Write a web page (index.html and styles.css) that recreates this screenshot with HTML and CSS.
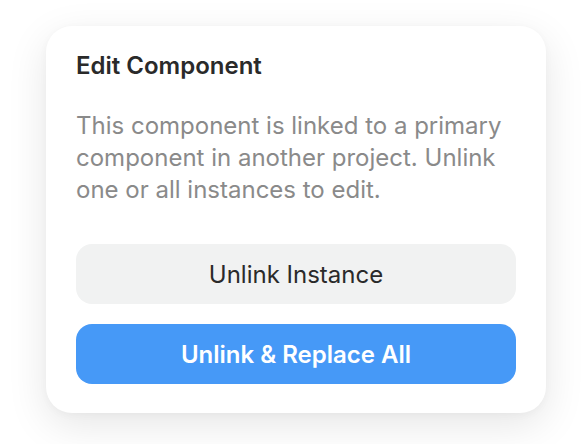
FILE: index.html
```html
<!DOCTYPE html>
<html>
<head>
<meta charset="utf-8">
<link rel="stylesheet" href="styles.css">
</head>
<body>
<div class="stage">
  <div class="card">
    <h1 class="title">Edit Component</h1>
    <p class="desc">This component is linked to a primary component in another project. Unlink one or all instances to edit.</p>
    <div class="actions">
      <button class="btn btn-secondary">Unlink Instance</button>
      <button class="btn btn-primary">Unlink &amp; Replace All</button>
    </div>
  </div>
</div>
</body>
</html>
```
FILE: styles.css
```css
html, body {
  margin: 0;
  padding: 0;
  background: #ffffff;
}
body {
  font-family: Inter, "Noto Sans", sans-serif;
  width: 588px;
  height: 444px;
  overflow: hidden;
}
.stage {
  padding: 26px 0 0 46px;
}
.card {
  width: 500px;
  box-sizing: border-box;
  padding: 24px 30px 29px 30px;
  background: #ffffff;
  border-radius: 26px;
  box-shadow: 0 12px 40px rgba(0, 0, 0, 0.10), 0 2px 8px rgba(0, 0, 0, 0.03);
}
.title {
  margin: 0;
  font-size: 24px;
  line-height: 32px;
  font-weight: 600;
  color: #2a2a2a;
}
.desc {
  margin: 28px 0 0 0;
  font-size: 24px;
  line-height: 32px;
  font-weight: 400;
  color: #8a8a8a;
}
.actions {
  margin-top: 38px;
  display: flex;
  flex-direction: column;
  gap: 20px;
}
.btn {
  height: 60px;
  border: none;
  border-radius: 16px;
  font-family: Inter, "Noto Sans", sans-serif;
  font-size: 24px;
  padding: 0;
}
.btn-secondary {
  background: #f1f2f2;
  color: #2a2a2a;
  font-weight: 400;
}
.btn-primary {
  background: #4699f7;
  color: #ffffff;
  font-weight: 600;
}
```
